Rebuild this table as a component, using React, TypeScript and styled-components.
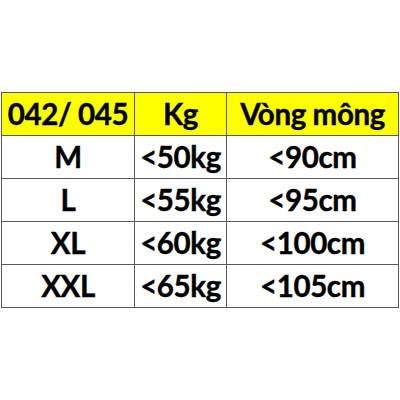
import React from "react";
import styled, { createGlobalStyle } from "styled-components";

const Global = createGlobalStyle`
  html, body { margin: 0; padding: 0; background: #fff; }
  body { width: 400px; height: 400px; overflow: hidden; }
`;

const Page = styled.div`
  width: 400px;
  height: 400px;
  padding-top: 92px;
  padding-left: 1px;
  box-sizing: border-box;
`;

const Table = styled.table`
  border-collapse: collapse;
  table-layout: fixed;
  width: 397px;
  font-family: Lato, "Open Sans", sans-serif;
  font-weight: 700;
  font-size: 29.5px;
  letter-spacing: -0.4px;
  color: #000;
`;

const Cell = styled.td<{ $head?: boolean }>`
  border: 1px solid #5a5a5a;
  height: 42px;
  padding: 0;
  text-align: center;
  vertical-align: middle;
  background: ${(p) => (p.$head ? "#ffff00" : "#fff")};
  line-height: 1;
  white-space: nowrap;
  -webkit-text-stroke: 0.4px #000;
`;

const rows = [
  ["M", "<50kg", "<90cm"],
  ["L", "<55kg", "<95cm"],
  ["XL", "<60kg", "<100cm"],
  ["XXL", "<65kg", "<105cm"],
];

export default function App() {
  return (
    <>
      <Global />
      <Page>
        <Table>
          <colgroup>
            <col style={{ width: 133 }} />
            <col style={{ width: 92 }} />
            <col style={{ width: 172 }} />
          </colgroup>
          <tbody>
            <tr>
              <Cell $head>042/ 045</Cell>
              <Cell $head>Kg</Cell>
              <Cell $head>Vòng mông</Cell>
            </tr>
            {rows.map((r) => (
              <tr key={r[0]}>
                {r.map((c) => (
                  <Cell key={c}>{c}</Cell>
                ))}
              </tr>
            ))}
          </tbody>
        </Table>
      </Page>
    </>
  );
}
